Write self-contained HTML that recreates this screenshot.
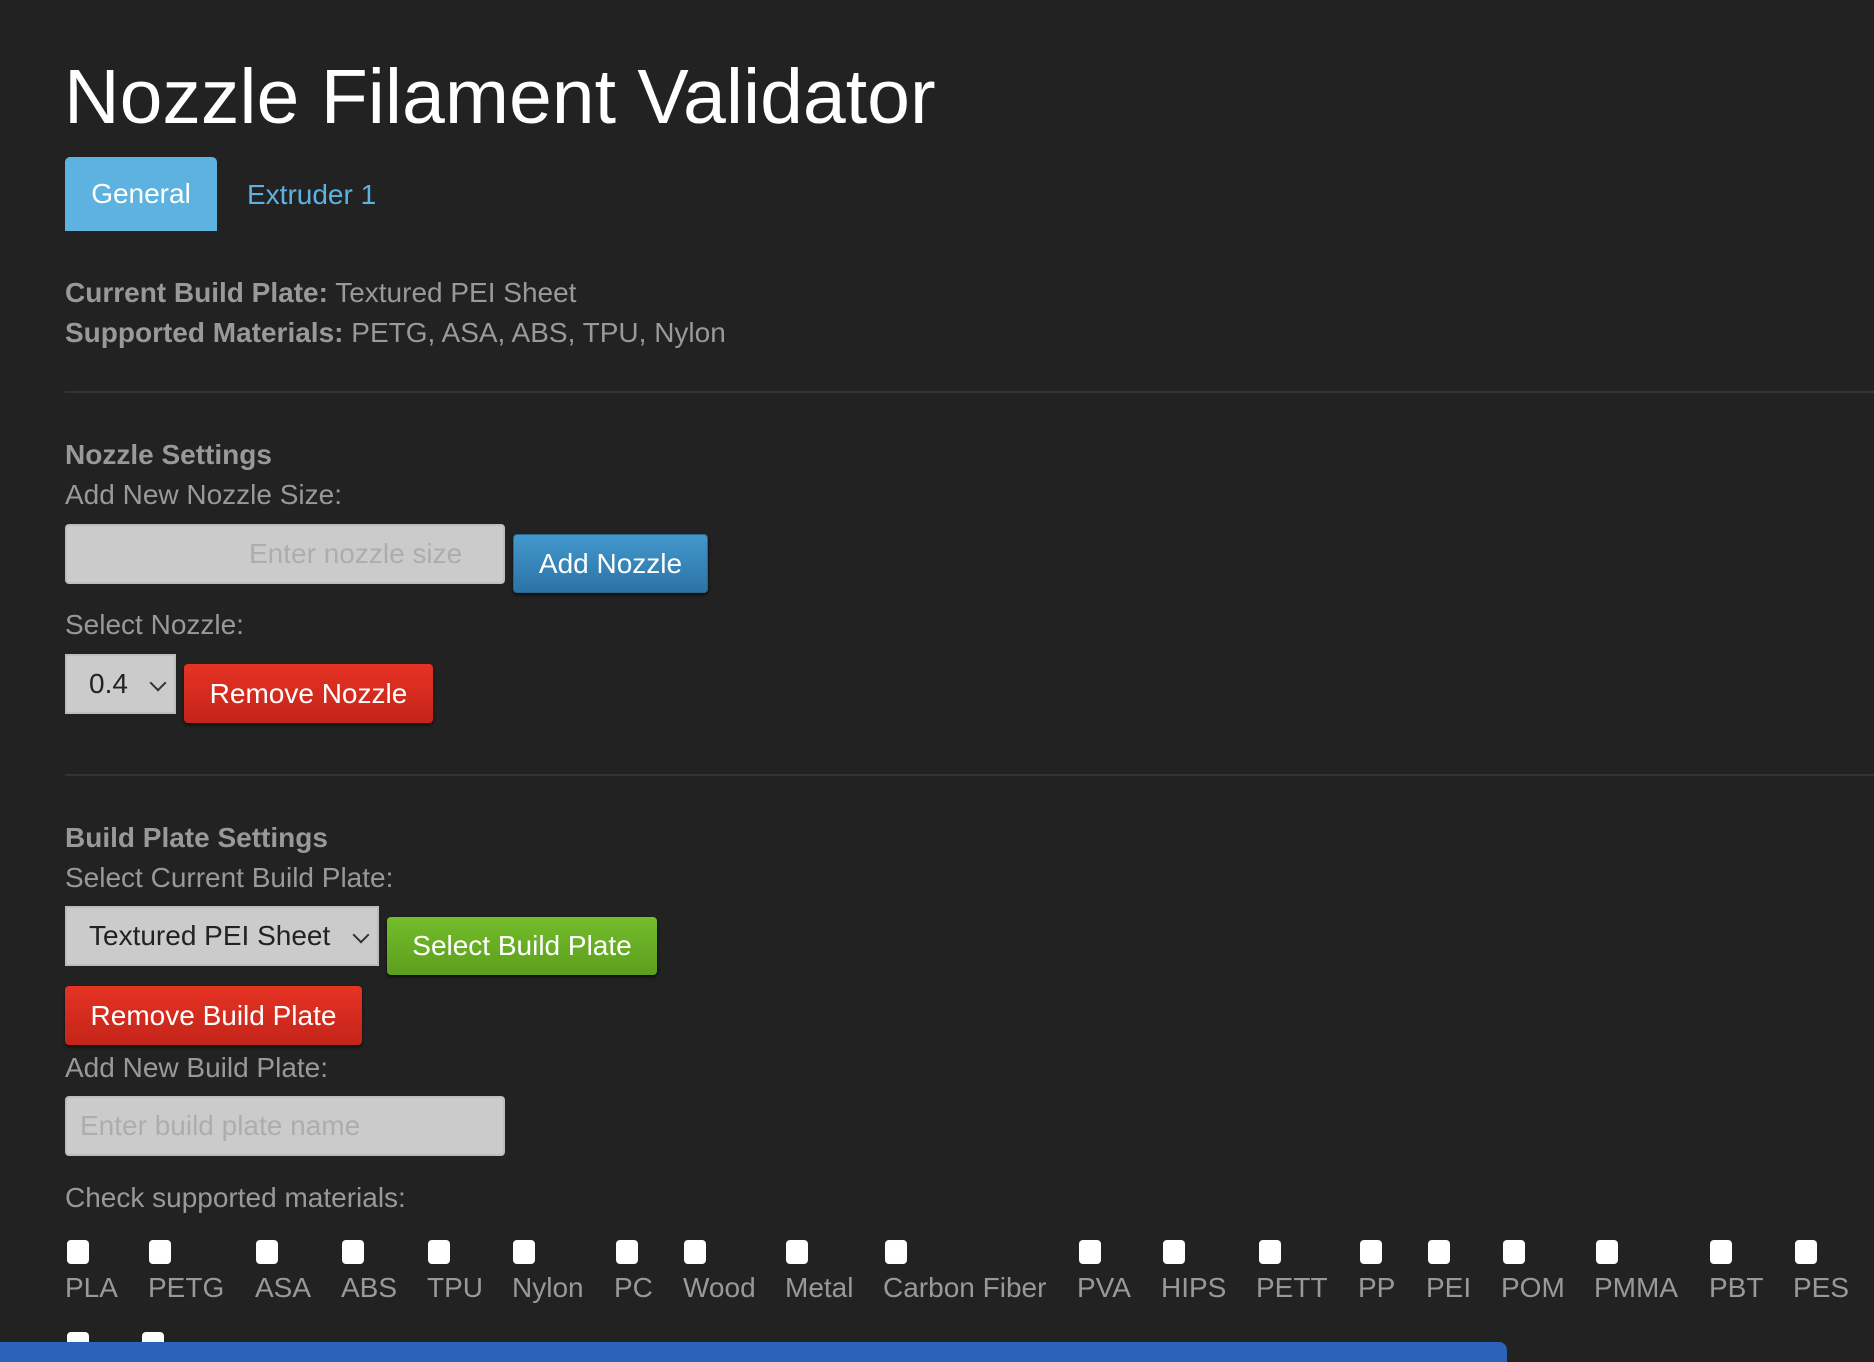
<!DOCTYPE html>
<html><head><meta charset="utf-8"><style>
body{margin:0;width:1874px;height:1354px;background:#222;overflow:hidden;position:relative;font-family:"Liberation Sans",Arial,sans-serif}
.a{position:absolute;white-space:nowrap;line-height:1}
.t{color:#999;font-size:28px}
.b{font-weight:bold}
.btn{position:absolute;color:#fff;font-size:28px;display:flex;align-items:center;justify-content:center;border-radius:4px;box-shadow:0 2px 3px rgba(0,0,0,.6)}
.inp{position:absolute;background:#cbcbcb;border:2px solid #bdbdbd;box-sizing:border-box;border-radius:4px;color:#adadad;font-size:28px;display:flex;align-items:center}
.cb{position:absolute;width:22px;height:24px;background:#fff;border-radius:4px;top:1240px}
.lb{position:absolute;top:1274px;color:#999;font-size:28px;line-height:1;white-space:nowrap}
.chev{position:absolute;right:10px;top:21px;width:10px;height:10px;border-right:2px solid #333;border-bottom:2px solid #333;transform:rotate(45deg)}
hr{position:absolute;margin:0;border:0;height:2px;background:#333;left:65px;width:1809px}
</style></head><body>
<div class="a" style="left:64px;top:59px;font-size:77px;color:#fff">Nozzle Filament Validator</div>
<div class="a" style="left:65px;top:157px;width:152px;height:74px;background:#5db2e0;border-radius:5px 5px 0 0;color:#fff;font-size:28px;display:flex;align-items:center;justify-content:center">General</div>
<div class="a" style="left:247px;top:181px;font-size:28px;color:#5db2e0">Extruder 1</div>
<div class="a t" style="left:65px;top:279px"><span class="b">Current Build Plate:</span> Textured PEI Sheet</div>
<div class="a t" style="left:65px;top:319px"><span class="b">Supported Materials:</span> PETG, ASA, ABS, TPU, Nylon</div>
<hr style="top:391px">
<div class="a t b" style="left:65px;top:441px">Nozzle Settings</div>
<div class="a t" style="left:65px;top:481px">Add New Nozzle Size:</div>
<div class="inp" style="left:65px;top:524px;width:440px;height:60px;padding-left:182px">Enter nozzle size</div>
<div class="btn" style="left:513px;top:534px;width:195px;height:59px;background:linear-gradient(#4298cc,#2c73a6);border:1px solid #2a6690;box-sizing:border-box">Add Nozzle</div>
<div class="a t" style="left:65px;top:611px">Select Nozzle:</div>
<div class="inp" style="left:65px;top:654px;width:111px;height:60px;border-radius:0;color:#222;padding-left:22px">0.4<span class="chev"></span></div>
<div class="btn" style="left:184px;top:664px;width:249px;height:59px;background:linear-gradient(#e53323,#c4241a)">Remove Nozzle</div>
<hr style="top:774px">
<div class="a t b" style="left:65px;top:824px">Build Plate Settings</div>
<div class="a t" style="left:65px;top:864px">Select Current Build Plate:</div>
<div class="inp" style="left:65px;top:906px;width:314px;height:60px;border-radius:0;color:#222;padding-left:22px">Textured PEI Sheet<span class="chev"></span></div>
<div class="btn" style="left:387px;top:917px;width:270px;height:58px;background:linear-gradient(#74bd2a,#5c9e1e)">Select Build Plate</div>
<div class="btn" style="left:65px;top:986px;width:297px;height:59px;background:linear-gradient(#e53323,#c4241a)">Remove Build Plate</div>
<div class="a t" style="left:65px;top:1054px">Add New Build Plate:</div>
<div class="inp" style="left:65px;top:1096px;width:440px;height:60px;padding-left:13px">Enter build plate name</div>
<div class="a t" style="left:65px;top:1184px">Check supported materials:</div>
<div class="cb" style="left:67px"></div><div class="lb" style="left:65px">PLA</div>
<div class="cb" style="left:149px"></div><div class="lb" style="left:148px">PETG</div>
<div class="cb" style="left:256px"></div><div class="lb" style="left:255px">ASA</div>
<div class="cb" style="left:342px"></div><div class="lb" style="left:341px">ABS</div>
<div class="cb" style="left:428px"></div><div class="lb" style="left:427px">TPU</div>
<div class="cb" style="left:513px"></div><div class="lb" style="left:512px">Nylon</div>
<div class="cb" style="left:616px"></div><div class="lb" style="left:614px">PC</div>
<div class="cb" style="left:684px"></div><div class="lb" style="left:683px">Wood</div>
<div class="cb" style="left:786px"></div><div class="lb" style="left:785px">Metal</div>
<div class="cb" style="left:885px"></div><div class="lb" style="left:883px">Carbon Fiber</div>
<div class="cb" style="left:1079px"></div><div class="lb" style="left:1077px">PVA</div>
<div class="cb" style="left:1163px"></div><div class="lb" style="left:1161px">HIPS</div>
<div class="cb" style="left:1259px"></div><div class="lb" style="left:1256px">PETT</div>
<div class="cb" style="left:1360px"></div><div class="lb" style="left:1358px">PP</div>
<div class="cb" style="left:1428px"></div><div class="lb" style="left:1426px">PEI</div>
<div class="cb" style="left:1503px"></div><div class="lb" style="left:1501px">POM</div>
<div class="cb" style="left:1596px"></div><div class="lb" style="left:1594px">PMMA</div>
<div class="cb" style="left:1710px"></div><div class="lb" style="left:1709px">PBT</div>
<div class="cb" style="left:1795px"></div><div class="lb" style="left:1793px">PES</div>
<div class="cb" style="left:67px;top:1332px"></div>
<div class="cb" style="left:142px;top:1332px"></div>
<div style="position:absolute;left:0;top:1342px;width:1507px;height:20px;background:#2b63b9;border-radius:0 8px 0 0"></div>
</body></html>
